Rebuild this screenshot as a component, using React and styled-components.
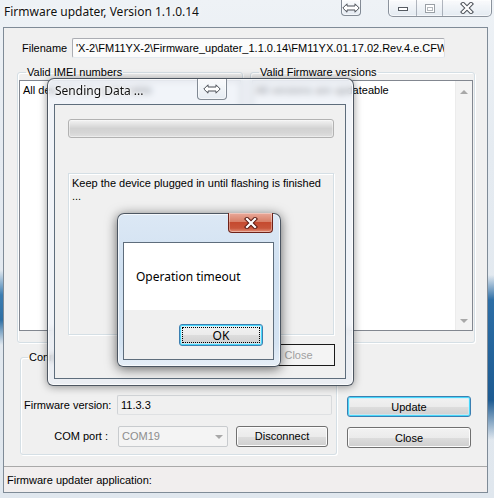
import React from "react";
import styled, { createGlobalStyle, css } from "styled-components";

const GlobalStyle = createGlobalStyle`
  html, body {
    margin: 0;
    padding: 0;
  }
  body {
    font-family: "Liberation Sans", Arial, sans-serif;
    font-size: 11px;
    color: #000;
  }
  * {
    box-sizing: border-box;
  }
`;

const aeroFont = `"Noto Sans", "Open Sans", sans-serif`;

const Desktop = styled.div`
  position: relative;
  width: 494px;
  height: 498px;
  overflow: hidden;
  display: flex;
  flex-direction: column;
  padding: 0 5px 5px 3px;
  background:
    linear-gradient(
        to bottom,
        rgba(40, 100, 160, 0) 275px,
        #2c6ea6 300px,
        #1d5b92 400px,
        rgba(40, 100, 160, 0) 440px
      )
      right top / 6px 100% no-repeat,
    linear-gradient(
        to bottom,
        rgba(40, 100, 160, 0) 270px,
        #3b7db1 295px,
        #2f70a4 320px,
        rgba(40, 100, 160, 0) 345px
      )
      left top / 3px 100% no-repeat,
    linear-gradient(to bottom, #eef2f6 0%, #e5ebf1 30%, #e0e7ee 100%);
`;

const TitleBar = styled.div`
  height: 27px;
  display: flex;
  align-items: flex-start;
`;

const WindowTitle = styled.div`
  font-family: ${aeroFont};
  font-size: 12px;
  line-height: 16px;
  margin: 4px 0 0 1px;
  color: #111;
  text-shadow: 0 0 6px #fff, 0 0 3px #fff;
  white-space: nowrap;
`;

const SnapButton = styled.div`
  width: ${(p) => p.$w}px;
  height: ${(p) => p.$h}px;
  margin-left: ${(p) => (p.$auto ? "auto" : "0")};
  margin-right: ${(p) => p.$mr || 0}px;
  border: 1px solid rgba(70, 80, 95, 0.65);
  border-top: none;
  border-radius: 0 0 4px 4px;
  background: linear-gradient(to bottom, rgba(255, 255, 255, 0.75), rgba(225, 232, 240, 0.7));
  box-shadow: inset 0 0 0 1px rgba(255, 255, 255, 0.6);
  display: flex;
  align-items: center;
  justify-content: center;
`;

const CaptionGroup = styled.div`
  display: flex;
  height: 17px;
  margin-right: -3px;
  border: 1px solid rgba(70, 80, 95, 0.6);
  border-top: none;
  border-radius: 0 0 5px 5px;
  overflow: hidden;
  background: linear-gradient(to bottom, rgba(255, 255, 255, 0.7), rgba(222, 230, 238, 0.65));
  box-shadow: inset 0 0 0 1px rgba(255, 255, 255, 0.6);
`;

const CaptionButton = styled.div`
  width: ${(p) => p.$w}px;
  height: 100%;
  display: flex;
  align-items: center;
  justify-content: center;
  & + & {
    border-left: 1px solid rgba(90, 100, 115, 0.45);
  }
`;

const Client = styled.div`
  flex: 1;
  margin-right: 1px;
  border: 1px solid #7f8b97;
  background: #f0f0f0;
  display: flex;
  flex-direction: column;
`;

const FileRow = styled.div`
  display: flex;
  align-items: center;
  margin: 10px 0 0 18px;
  height: 20px;
`;

const Label = styled.span`
  width: ${(p) => (p.$w ? `${p.$w}px` : "auto")};
  text-align: ${(p) => (p.$right ? "right" : "left")};
  padding-right: ${(p) => p.$pr || 0}px;
  white-space: nowrap;
  color: ${(p) => (p.$muted ? "#8d8d8d" : "#000")};
`;

const TextBox = styled.div`
  width: ${(p) => p.$w}px;
  height: ${(p) => p.$h}px;
  padding-left: 3px;
  display: flex;
  align-items: center;
  overflow: hidden;
  white-space: nowrap;
  border: 1px solid ${(p) => (p.$readonly ? "#d0d3d6" : "#abadb3")};
  border-right-color: ${(p) => (p.$readonly ? "#d9dbdd" : "#dbdfe6")};
  border-bottom-color: ${(p) => (p.$readonly ? "#dfe1e3" : "#e3e9ef")};
  background: ${(p) => (p.$readonly ? "#f0f0f0" : "#fbfbfb")};
  border-radius: 2px;
`;

const ListsRow = styled.div`
  display: grid;
  grid-template-columns: 226px 225px;
  column-gap: 7px;
  margin: 8px 0 0 13px;
`;

const GroupBox = styled.fieldset`
  margin: 0;
  min-width: 0;
  width: ${(p) => (p.$w ? `${p.$w}px` : "auto")};
  border: 1px solid #d5dfe5;
  border-radius: 3px;
  box-shadow: inset 1px 1px 0 #fff, 1px 1px 0 #fff;
  padding: ${(p) => p.$pad};
  line-height: 13px;
`;

const Legend = styled.legend`
  padding: 0 1px;
  margin-left: 7px;
  line-height: 13px;
  white-space: nowrap;
  max-width: ${(p) => (p.$clip ? `${p.$clip}px` : "none")};
  overflow: hidden;
`;

const ListBox = styled.div`
  height: 251px;
  border: 1px solid #828790;
  background: #fff;
  display: flex;
`;

const ListItems = styled.div`
  flex: 1;
  padding: 3px 0 0 3px;
  line-height: 13px;
  white-space: nowrap;
  overflow: hidden;
`;

const ScrollBar = styled.div`
  width: 17px;
  background: #f3f3f3;
  border-left: 1px solid #ececec;
  display: flex;
  flex-direction: column;
  justify-content: space-between;
  align-items: center;
  padding: 9px 0 7px;
`;

const Arrow = styled.div`
  width: 0;
  height: 0;
  border-left: 4px solid transparent;
  border-right: 4px solid transparent;
  ${(p) =>
    p.$down
      ? css`border-top: 4px solid #a8a8a8;`
      : css`border-bottom: 4px solid #a8a8a8;`}
`;

const BottomRow = styled.div`
  display: flex;
  align-items: flex-start;
  margin: 8px 0 0 16px;
`;

const FormGrid = styled.div`
  display: grid;
  grid-template-columns: 93px auto;
  row-gap: 11px;
  align-items: center;
  padding-left: 3px;
`;

const ComRow = styled.div`
  display: flex;
  align-items: center;
  gap: 8px;
  margin-left: 1px;
`;

const ComboBox = styled.div`
  width: 110px;
  height: 21px;
  border: 1px solid #c8cbce;
  border-radius: 2px;
  background: #f4f4f4;
  color: #8d8d8d;
  display: flex;
  align-items: center;
  justify-content: space-between;
  padding: 0 4px 0 3px;
`;

const ButtonColumn = styled.div`
  display: flex;
  flex-direction: column;
  gap: 10px;
  margin: 45px 0 0 10px;
`;

const Button = styled.div`
  width: ${(p) => p.$w}px;
  height: ${(p) => p.$h}px;
  display: flex;
  align-items: center;
  justify-content: center;
  border: 1px solid ${(p) => (p.$focused ? "#3c7fb1" : "#707070")};
  border-radius: 3px;
  background: ${(p) =>
    p.$focused
      ? "linear-gradient(to bottom, #eaf6fd 0%, #d9f0fc 50%, #bee6fd 51%, #a7d9f5 100%)"
      : "linear-gradient(to bottom, #f2f2f2 0%, #ebebeb 50%, #dddddd 51%, #cfcfcf 100%)"};
  box-shadow: inset 0 0 0 1px ${(p) => (p.$focused ? "rgba(255,255,255,0.5)" : "#fcfcfc")};
  ${(p) =>
    p.$focused &&
    css`
      background: linear-gradient(to bottom, #f2f2f2 0%, #ebebeb 50%, #dddddd 51%, #cfcfcf 100%);
      box-shadow: inset 0 0 0 1px #48d8fb, inset 0 0 0 2px rgba(200, 240, 255, 0.6);
    `}
  font-family: ${(p) => (p.$aero ? aeroFont : "inherit")};
  font-size: ${(p) => (p.$aero ? "12px" : "11px")};
  color: #000;
`;

const FocusRect = styled.span`
  display: flex;
  align-items: center;
  justify-content: center;
  width: calc(100% - 6px);
  height: calc(100% - 6px);
  outline: 1px dotted #000;
`;

const FlatButton = styled.div`
  width: 73px;
  height: 22px;
  margin-left: 207px;
  margin-top: 9px;
  border: 1px solid #1a1a1a;
  background: #f4f4f4;
  color: #a0a0a0;
  display: flex;
  align-items: center;
  justify-content: center;
`;

const StatusBar = styled.div`
  margin-top: auto;
  height: 26px;
  border-top: 1px solid #a9a9a9;
  background: #f1eeee;
  display: flex;
  align-items: center;
  padding-left: 3px;
`;

/* overlapping dialog windows */

const DialogFrame = styled.div`
  position: absolute;
  left: ${(p) => p.$x}px;
  top: ${(p) => p.$y}px;
  width: ${(p) => p.$w}px;
  height: ${(p) => p.$h}px;
  display: flex;
  flex-direction: column;
  padding: ${(p) => p.$pad};
  border: 1px solid rgba(50, 60, 72, 0.85);
  border-radius: 7px 7px 6px 6px;
  ${(p) =>
    p.$active
      ? css`
          background: linear-gradient(to bottom, #dce8f5 0%, #cfe0f1 40%, #d4e3f2 85%, #e6eef7 100%);
          box-shadow: 0 2px 12px rgba(0, 0, 0, 0.6), inset 0 0 0 1px rgba(255, 255, 255, 0.7);
        `
      : css`
          background: rgba(232, 238, 245, 0.62);
          backdrop-filter: blur(3px);
          box-shadow: 0 1px 9px rgba(0, 0, 0, 0.4), inset 0 0 0 1px rgba(255, 255, 255, 0.7);
        `}
`;

const DialogTitleBar = styled.div`
  height: ${(p) => p.$h}px;
  flex-shrink: 0;
  display: grid;
  grid-template-columns: ${(p) => p.$cols};
  align-items: start;
`;

const DialogTitle = styled.div`
  font-family: ${aeroFont};
  font-size: 12px;
  line-height: 16px;
  margin: 4px 0 0 1px;
  color: #111;
  text-shadow: 0 0 6px #fff, 0 0 3px #fff, 0 0 2px #fff;
  white-space: nowrap;
`;

const RedClose = styled.div`
  width: 45px;
  height: 20px;
  margin-top: -1px;
  border: 1px solid #6e2219;
  border-top: none;
  border-radius: 0 0 4px 4px;
  background: linear-gradient(to bottom, #e9a99a 0%, #d88068 45%, #c54a2f 50%, #c8553a 80%, #e5917a 100%);
  box-shadow: inset 0 0 0 1px rgba(255, 255, 255, 0.35);
  display: flex;
  align-items: center;
  justify-content: center;
`;

const DialogClient = styled.div`
  flex: 1;
  border: 1px solid #5e6d7c;
  background: #f0f0f0;
  display: flex;
  flex-direction: column;
`;

const ProgressBar = styled.div`
  width: 266px;
  height: 19px;
  margin: 14px 0 0 13px;
  border: 1px solid #b2b2b2;
  border-radius: 3px;
  background: linear-gradient(to bottom, #f3f3f3 0%, #e3e3e3 25%, #d2d2d2 50%, #d6d6d6 75%, #e0e0e0 100%);
  box-shadow: inset 0 0 0 1px rgba(255, 255, 255, 0.4);
`;

const MessagePanel = styled.div`
  width: 266px;
  height: 162px;
  margin: 35px 0 0 13px;
  border: 1px solid #d5dfe5;
  box-shadow: inset 1px 1px 0 #fff, 1px 1px 0 #fff;
  padding: 3px 0 0 3px;
  line-height: 13px;
`;

const MsgBody = styled.div`
  height: 67px;
  background: #fff;
  padding: 26px 0 0 12px;
  font-family: ${aeroFont};
  font-size: 12px;
  line-height: 16px;
`;

const MsgFooter = styled.div`
  flex: 1;
  display: flex;
  justify-content: flex-end;
  padding: 14px 10px 0 0;
`;

const SnapIcon = () => (
  <svg width="18" height="10" viewBox="0 0 18 10">
    <path
      d="M0.8 5 L5 0.8 V3 H13 V0.8 L17.2 5 L13 9.2 V7 H5 V9.2 Z"
      fill="#fff"
      stroke="#4a4f56"
      strokeWidth="1"
      strokeLinejoin="miter"
    />
  </svg>
);

const XIcon = ({ outline = "#4d5259", size = 12 }) => (
  <svg width={size + 2} height={size} viewBox="0 0 14 12">
    <path d="M3 2 L11 10 M11 2 L3 10" stroke={outline} strokeWidth="4.2" strokeLinecap="square" />
    <path d="M3 2 L11 10 M11 2 L3 10" stroke="#fff" strokeWidth="2.2" strokeLinecap="square" />
  </svg>
);

const MinIcon = () => (
  <svg width="12" height="8" viewBox="0 0 12 8">
    <rect x="1.5" y="3.5" width="9" height="3" fill="#fff" stroke="#555b62" />
  </svg>
);

const MaxIcon = () => (
  <svg width="12" height="11" viewBox="0 0 12 11">
    <rect x="1.5" y="1.5" width="9" height="8" fill="#fff" stroke="#9aa0a6" />
    <rect x="3.5" y="4.5" width="5" height="3" fill="none" stroke="#b4b9be" />
  </svg>
);

const App = () => {
  return (
    <>
      <GlobalStyle />
      <Desktop>
        <TitleBar>
          <WindowTitle>Firmware updater, Version 1.1.0.14</WindowTitle>
          <SnapButton $w={20} $h={16} $auto $mr={27}>
            <SnapIcon />
          </SnapButton>
          <CaptionGroup>
            <CaptionButton $w={27}>
              <MinIcon />
            </CaptionButton>
            <CaptionButton $w={26}>
              <MaxIcon />
            </CaptionButton>
            <CaptionButton $w={49}>
              <XIcon />
            </CaptionButton>
          </CaptionGroup>
        </TitleBar>

        <Client>
          <FileRow>
            <Label $w={50}>Filename</Label>
            <TextBox $w={373} $h={20}>
              'X-2\FM11YX-2\Firmware_updater_1.1.0.14\FM11YX.01.17.02.Rev.4.e.CFW
            </TextBox>
          </FileRow>

          <ListsRow>
            <GroupBox $pad="1px 1px 11px 1px">
              <Legend>Valid IMEI numbers</Legend>
              <ListBox>
                <ListItems>All devices are updateable</ListItems>
              </ListBox>
            </GroupBox>
            <GroupBox $pad="1px 1px 11px 1px">
              <Legend>Valid Firmware versions</Legend>
              <ListBox>
                <ListItems>All versions are updateable</ListItems>
                <ScrollBar>
                  <Arrow />
                  <Arrow $down />
                </ScrollBar>
              </ListBox>
            </GroupBox>
          </ListsRow>

          <BottomRow>
            <GroupBox $w={317} $pad="31px 4px 7px 0">
              <Legend>Connection</Legend>
              <FormGrid>
                <Label>Firmware version:</Label>
                <TextBox $w={215} $h={20} $readonly>
                  11.3.3
                </TextBox>
                <Label $right $pr={9}>
                  COM port :
                </Label>
                <ComRow>
                  <ComboBox>
                    <span>COM19</span>
                    <Arrow $down />
                  </ComboBox>
                  <Button $w={92} $h={21}>
                    Disconnect
                  </Button>
                </ComRow>
              </FormGrid>
            </GroupBox>
            <ButtonColumn>
              <Button $w={124} $h={21} $focused>
                Update
              </Button>
              <Button $w={124} $h={21}>
                Close
              </Button>
            </ButtonColumn>
          </BottomRow>

          <StatusBar>Firmware updater application:</StatusBar>
        </Client>

        <DialogFrame $x={47} $y={78} $w={307} $h={308} $pad="0 7px 6px 6px">
          <DialogTitleBar $h={25} $cols="143px 30px">
            <DialogTitle>Sending Data ...</DialogTitle>
            <SnapButton $w={30} $h={21}>
              <SnapIcon />
            </SnapButton>
          </DialogTitleBar>
          <DialogClient>
            <ProgressBar />
            <MessagePanel>
              Keep the device plugged in until flashing is finished
              <br />
              ...
            </MessagePanel>
            <FlatButton>Close</FlatButton>
          </DialogClient>
        </DialogFrame>

        <DialogFrame $x={117} $y={213} $w={164} $h={154} $pad="0 6px 6px 5px" $active>
          <DialogTitleBar $h={28} $cols="1fr 45px 1px">
            <span />
            <RedClose>
              <XIcon outline="#5a1a12" />
            </RedClose>
          </DialogTitleBar>
          <DialogClient>
            <MsgBody>Operation timeout</MsgBody>
            <MsgFooter>
              <Button $w={84} $h={22} $focused $aero>
                <FocusRect>OK</FocusRect>
              </Button>
            </MsgFooter>
          </DialogClient>
        </DialogFrame>
      </Desktop>
    </>
  );
};

export default App;
